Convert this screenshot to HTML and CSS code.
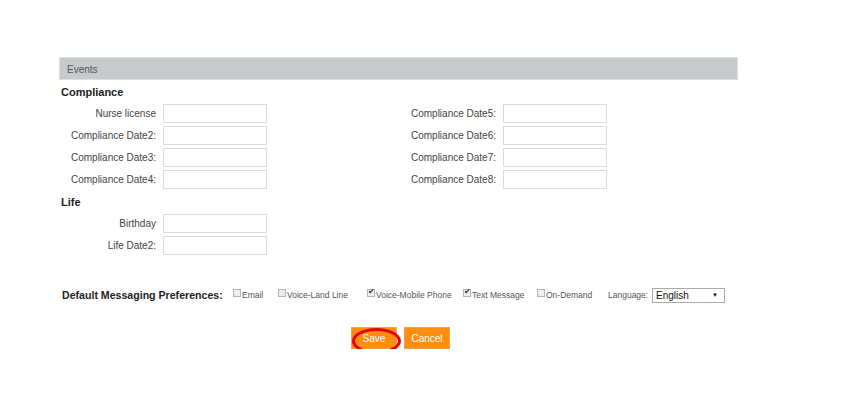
FILE: index.html
```html
<!DOCTYPE html>
<html lang="en">
<head>
    <meta charset="UTF-8">
    <title>Events</title>
    <link rel="stylesheet" href="styles.css">
</head>
<body>
    <div class="events-panel">
        <div class="panel-header">Events</div>

        <h3 class="group-title">Compliance</h3>
        <div class="field-grid">
            <div class="field"><label>Nurse license</label><input type="text"></div>
            <div class="field"><label>Compliance Date5:</label><input type="text"></div>
            <div class="field"><label>Compliance Date2:</label><input type="text"></div>
            <div class="field"><label>Compliance Date6:</label><input type="text"></div>
            <div class="field"><label>Compliance Date3:</label><input type="text"></div>
            <div class="field"><label>Compliance Date7:</label><input type="text"></div>
            <div class="field"><label>Compliance Date4:</label><input type="text"></div>
            <div class="field"><label>Compliance Date8:</label><input type="text"></div>
        </div>

        <h3 class="group-title life">Life</h3>
        <div class="field-grid">
            <div class="field"><label>Birthday</label><input type="text"></div>
            <div class="field"></div>
            <div class="field"><label>Life Date2:</label><input type="text"></div>
        </div>

        <div class="prefs">
            <span class="prefs-label">Default Messaging Preferences:</span>
            <span class="pref w-email"><span class="box"></span>Email</span>
            <span class="pref w-land"><span class="box"></span>Voice-Land Line</span>
            <span class="pref w-mobile"><span class="box checked"></span>Voice-Mobile Phone</span>
            <span class="pref w-text"><span class="box checked"></span>Text Message</span>
            <span class="pref w-demand"><span class="box"></span>On-Demand</span>
            <span class="pref w-lang">Language:</span>
            <span class="lang-select">English<span class="arrow">&#9660;</span></span>
        </div>

        <div class="actions">
            <button class="btn btn-save">Save<span class="mark"></span></button>
            <button class="btn">Cancel</button>
        </div>
    </div>
</body>
</html>
```

FILE: styles.css
```css
* {
    margin: 0;
    padding: 0;
    box-sizing: border-box;
}

body {
    font-family: "Liberation Sans", Arial, sans-serif;
    background: #fff;
    color: #444;
    font-size: 10px;
}

.events-panel {
    margin: 57px 0 0 59px;
    width: 679px;
}

.panel-header {
    height: 23px;
    line-height: 23px;
    background: #c6cacd;
    border: 1px solid #dde0e2;
    padding-left: 7px;
    color: #555;
    font-size: 10px;
}

.group-title {
    font-size: 11px;
    font-weight: bold;
    color: #222;
    margin: 5px 0 4px 2px;
    line-height: 15px;
}

.group-title.life {
    margin-top: 6px;
}

.field-grid {
    display: grid;
    grid-template-columns: 340px 340px;
    row-gap: 3px;
}

.field {
    display: flex;
    align-items: center;
    height: 19px;
}

.field label {
    width: 97px;
    text-align: right;
    margin-right: 7px;
    color: #444;
    white-space: nowrap;
}

.field input {
    width: 104px;
    height: 19px;
    border: 1px solid #dcdcdc;
    background: #fff;
}

.prefs {
    display: flex;
    align-items: center;
    margin-top: 32px;
    height: 16px;
    font-size: 8.5px;
    color: #555;
    white-space: nowrap;
}

.prefs-label {
    font-size: 10.6px;
    font-weight: bold;
    color: #222;
    margin: 0 9px 0 3px;
    width: 162px;
}

.pref {
    display: flex;
    align-items: center;
}

.w-email { width: 45px; }
.w-land { width: 89px; }
.w-mobile { width: 96px; }
.w-text { width: 74px; }
.w-demand { width: 71px; }
.w-lang { width: 44px; }

.box {
    width: 8px;
    height: 8px;
    border: 1px solid #b5b5b5;
    background: #eee;
    margin-right: 1px;
    position: relative;
    top: -2px;
}

.box.checked::after {
    content: "\2714";
    position: absolute;
    left: 0;
    top: -3px;
    font-size: 8px;
    color: #333;
}

.lang-select {
    display: flex;
    justify-content: space-between;
    align-items: center;
    width: 73px;
    height: 15px;
    padding: 0 6px 0 3px;
    border: 1px solid #aaa;
    font-size: 10px;
    color: #111;
}

.lang-select .arrow {
    font-size: 6px;
}

.actions {
    display: flex;
    justify-content: center;
    gap: 7px;
    margin-top: 24px;
    padding-left: 4px;
}

.btn {
    width: 46px;
    height: 22px;
    background: #ff8e0c;
    border: 1px solid #f5a24a;
    color: #fff;
    font-family: "Liberation Sans", Arial, sans-serif;
    font-size: 10px;
}

.btn-save {
    position: relative;
}

/* red ring highlighting the save button */
.btn-save .mark {
    position: absolute;
    left: 0;
    top: 0;
    width: 49px;
    height: 26px;
    border: 3px solid #e8000b;
    border-radius: 50%;
}
```
